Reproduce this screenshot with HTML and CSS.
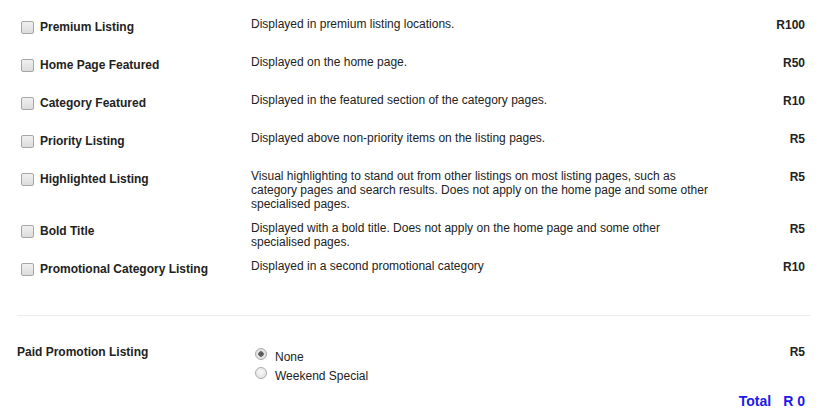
FILE: index.html
```html
<!DOCTYPE html>
<html>
<head>
<meta charset="utf-8">
<link rel="stylesheet" href="styles.css">
</head>
<body>
<div class="page">
  <div class="options">
    <div class="row">
      <label class="name"><input type="checkbox" class="chk"><span>Premium Listing</span></label>
      <div class="desc">Displayed in premium listing locations.</div>
      <div class="price">R100</div>
    </div>
    <div class="row">
      <label class="name"><input type="checkbox" class="chk"><span>Home Page Featured</span></label>
      <div class="desc">Displayed on the home page.</div>
      <div class="price">R50</div>
    </div>
    <div class="row">
      <label class="name"><input type="checkbox" class="chk"><span>Category Featured</span></label>
      <div class="desc">Displayed in the featured section of the category pages.</div>
      <div class="price">R10</div>
    </div>
    <div class="row">
      <label class="name"><input type="checkbox" class="chk"><span>Priority Listing</span></label>
      <div class="desc">Displayed above non-priority items on the listing pages.</div>
      <div class="price">R5</div>
    </div>
    <div class="row">
      <label class="name"><input type="checkbox" class="chk"><span>Highlighted Listing</span></label>
      <div class="desc">Visual highlighting to stand out from other listings on most listing pages, such as category pages and search results. Does not apply on the home page and some other specialised pages.</div>
      <div class="price">R5</div>
    </div>
    <div class="row">
      <label class="name"><input type="checkbox" class="chk"><span>Bold Title</span></label>
      <div class="desc">Displayed with a bold title. Does not apply on the home page and some other specialised pages.</div>
      <div class="price">R5</div>
    </div>
    <div class="row">
      <label class="name"><input type="checkbox" class="chk"><span>Promotional Category Listing</span></label>
      <div class="desc">Displayed in a second promotional category</div>
      <div class="price">R10</div>
    </div>
  </div>
  <hr class="divider">
  <div class="paid">
    <div class="paid-label">Paid Promotion Listing</div>
    <div class="radios">
      <label class="radio-opt"><input type="radio" name="paid" class="rad" checked><span>None</span></label>
      <label class="radio-opt"><input type="radio" name="paid" class="rad"><span>Weekend Special</span></label>
    </div>
    <div class="price paid-price">R5</div>
  </div>
  <div class="total"><span>Total</span><span>R 0</span></div>
</div>
</body>
</html>
```

FILE: styles.css
```css
html, body {
  margin: 0;
  padding: 0;
  background: #fff;
}
body {
  font-family: "Liberation Sans", Arial, sans-serif;
  color: #222;
  font-size: 12px;
}
.page {
  width: 793px;
  padding: 17px 0 0 17px;
}
.options {
  display: flex;
  flex-direction: column;
}
.row {
  display: grid;
  grid-template-columns: 234px 468px 1fr;
  min-height: 28px;
  padding-bottom: 10px;
}
.name {
  display: flex;
  align-items: flex-start;
  font-weight: bold;
  font-size: 12px;
  line-height: 14px;
  padding-top: 3px;
}
.chk {
  -webkit-appearance: none;
  appearance: none;
  width: 13px;
  height: 13px;
  margin: 1px 6px 0 4px;
  border: 1px solid #a6a6a6;
  border-radius: 2px;
  background: linear-gradient(#f0f0f0, #dcdcdc);
  box-sizing: border-box;
  flex: none;
}
.desc {
  line-height: 14px;
}
.price {
  font-weight: bold;
  text-align: right;
  line-height: 14px;
  padding-top: 1px;
  padding-right: 5px;
}
.divider {
  border: 0;
  border-top: 1px solid #ececec;
  margin: 18px 0 0 0;
  height: 0;
}
.paid {
  display: grid;
  grid-template-columns: 234px 468px 1fr;
  padding-top: 29px;
}
.paid-label {
  font-weight: bold;
  font-size: 12px;
  line-height: 14px;
}
.radios {
  display: flex;
  flex-direction: column;
  gap: 3px;
  padding-top: 3px;
}
.radio-opt {
  display: flex;
  align-items: flex-start;
  line-height: 14px;
}
.rad {
  -webkit-appearance: none;
  appearance: none;
  width: 12px;
  height: 12px;
  margin: 0 8px 0 4px;
  border: 1px solid #ababab;
  border-radius: 50%;
  background: radial-gradient(circle at 50% 40%, #f8f8f8, #dedede);
  box-sizing: border-box;
  flex: none;
}
.rad:checked {
  background: radial-gradient(circle, #555 0, #666 2.5px, #e6e6e6 3px, #dedede 100%);
}
.radio-opt span {
  padding-top: 2px;
}
.paid-price {
  padding-top: 0;
}
.total {
  display: flex;
  justify-content: flex-end;
  gap: 12px;
  padding: 10px 5px 0 0;
  color: #1a1aee;
  font-weight: bold;
  font-size: 14px;
  line-height: 16px;
}
```
